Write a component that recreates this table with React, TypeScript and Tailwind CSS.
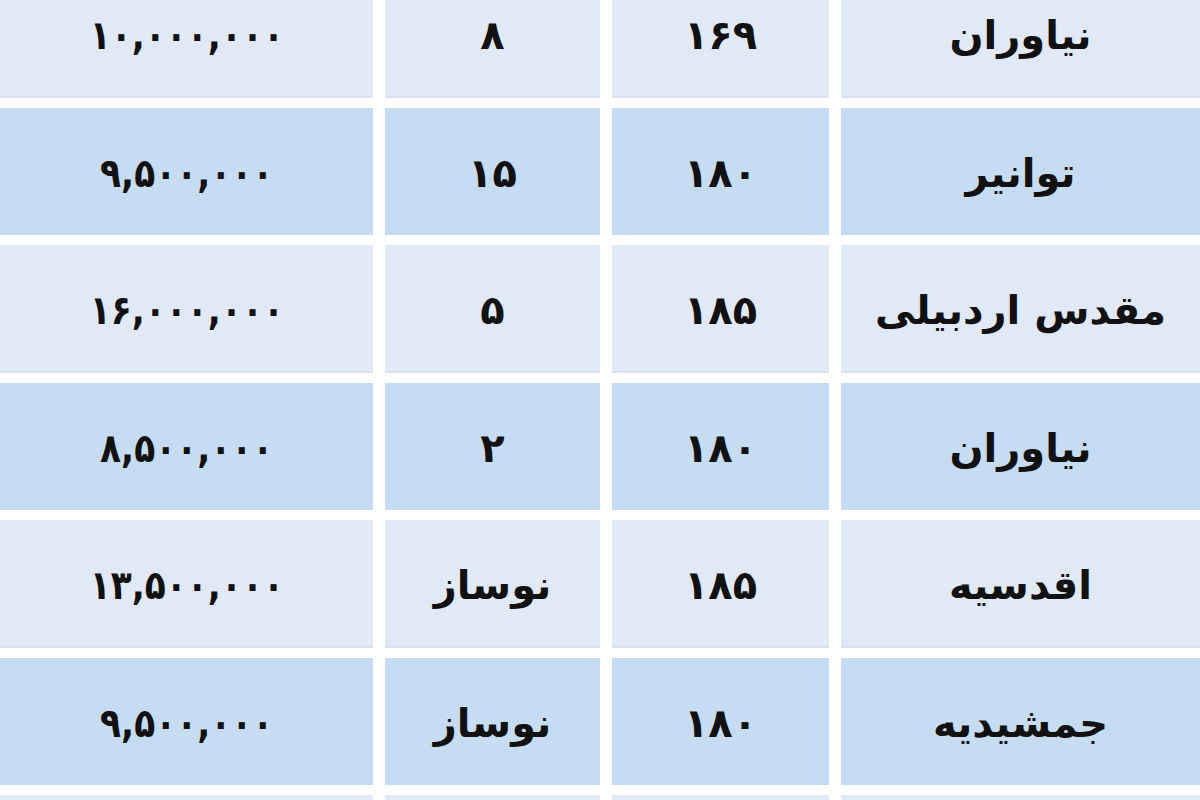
const rows: string[][] = [
  ["نیاوران", "۱۶۹", "۸", "۱۰,۰۰۰,۰۰۰"],
  ["توانیر", "۱۸۰", "۱۵", "۹,۵۰۰,۰۰۰"],
  ["مقدس اردبیلی", "۱۸۵", "۵", "۱۶,۰۰۰,۰۰۰"],
  ["نیاوران", "۱۸۰", "۲", "۸,۵۰۰,۰۰۰"],
  ["اقدسیه", "۱۸۵", "نوساز", "۱۳,۵۰۰,۰۰۰"],
  ["جمشیدیه", "۱۸۰", "نوساز", "۹,۵۰۰,۰۰۰"],
  ["", "", "", ""],
];

export default function App() {
  return (
    <div className="h-[800px] w-[1200px] overflow-hidden bg-white">
      <div
        dir="rtl"
        className="mt-[-30px] grid grid-cols-[359px_217px_215px_373px] auto-rows-[127.5px] gap-x-[12px] gap-y-[10px] text-[40px] font-bold text-[#111] font-['DejaVu_Sans',sans-serif]"
      >
        {rows.map((row, i) =>
          row.map((cell, j) => (
            <div
              key={`${i}-${j}`}
              className={
                i % 2 === 0
                  ? "flex items-center justify-center bg-[#e2e9f6] border-b-2 border-[#d9e1ef] pt-[4px]"
                  : "flex items-center justify-center bg-[#c6dcf2] pt-[4px]"
              }
            >
              {/* price digits run wider in bold, squeeze them a little */}
              <span className={j === 3 ? "leading-none inline-block scale-x-[0.86]" : "leading-none"}>
                {cell}
              </span>
            </div>
          ))
        )}
      </div>
    </div>
  );
}
